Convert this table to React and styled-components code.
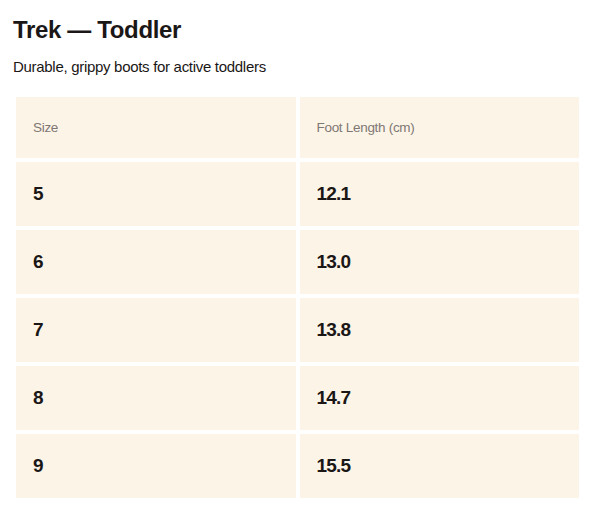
import React from 'react'
import styled, { createGlobalStyle } from 'styled-components'

const GlobalStyle = createGlobalStyle`
    body {
        margin: 0;
        background: #ffffff;
        font-family: 'Liberation Sans', Arial, sans-serif;
        color: #1a1716;
    }
`;

const Page = styled.div`
    padding: 15px 12px 12px 12px;
`;

const Title = styled.h1`
    margin: 0 0 0 1px;
    font-size: 24px;
    font-weight: 700;
    letter-spacing: -0.35px;
    line-height: 30px;
`;

const Subtitle = styled.p`
    margin: 12px 0 0 1px;
    font-size: 15px;
    font-weight: 400;
    letter-spacing: -0.3px;
    line-height: 20px;
`;

const Table = styled.table`
    margin-top: 16px;
    width: 100%;
    border-collapse: separate;
    border-spacing: 4px;
`;

const HeadCell = styled.th`
    background: #fdf4e8;
    height: 61px;
    padding: 0 17px;
    text-align: left;
    font-size: 13.5px;
    font-weight: 400;
    color: #7d7873;
    letter-spacing: -0.3px;
    width: 50%;
`;

const Cell = styled.td`
    background: #fdf4e8;
    height: 64px;
    padding: 0 17px;
    font-size: 19px;
    font-weight: 700;
    letter-spacing: -0.8px;
`;

const rows = [
    ['5', '12.1'],
    ['6', '13.0'],
    ['7', '13.8'],
    ['8', '14.7'],
    ['9', '15.5'],
];

export default function App(){
    return (
        <Page>
            <GlobalStyle />
            <Title>Trek — Toddler</Title>
            <Subtitle>Durable, grippy boots for active toddlers</Subtitle>
            <Table>
                <thead>
                    <tr>
                        <HeadCell>Size</HeadCell>
                        <HeadCell>Foot Length (cm)</HeadCell>
                    </tr>
                </thead>
                <tbody>
                    {rows.map(([size, len]) => (
                        <tr key={size}>
                            <Cell>{size}</Cell>
                            <Cell>{len}</Cell>
                        </tr>
                    ))}
                </tbody>
            </Table>
        </Page>
    )
}
